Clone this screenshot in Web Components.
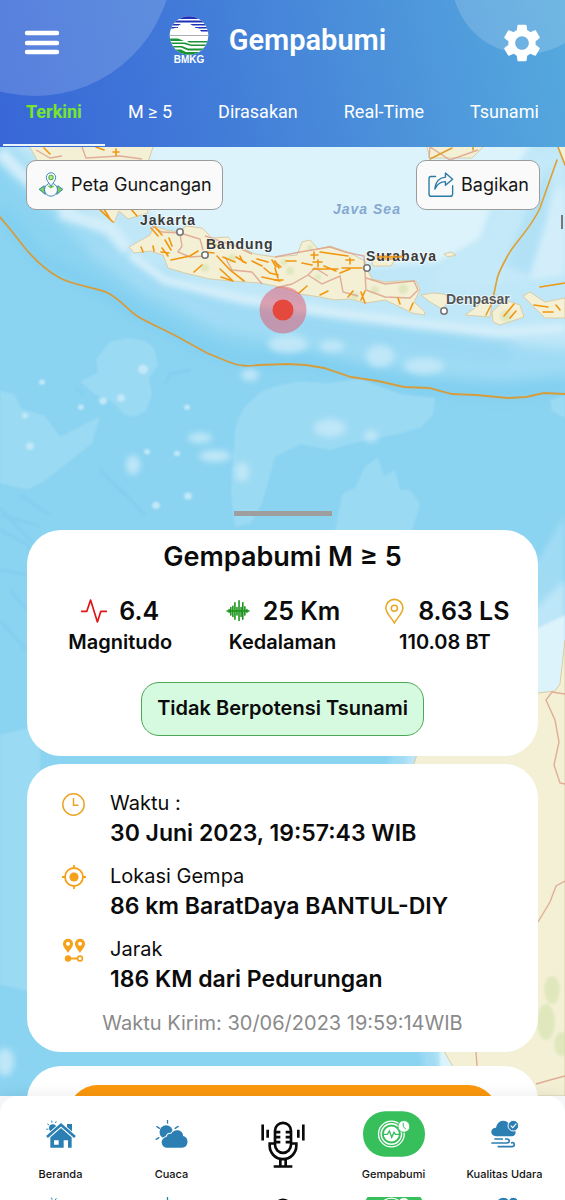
<!DOCTYPE html>
<html lang="id">
<head>
<meta charset="utf-8">
<meta name="viewport" content="width=device-width, initial-scale=1">
<title>Gempabumi</title>
<style>
  html, body { margin: 0; height: 100%; }
  body { font-family: Inter, "Liberation Sans", sans-serif; color: #0b0b0b; background: #fff; }
</style>
</head>
<body>
<gempa-app></gempa-app>

<template id="t-app">
  <style>
    :host { display: flex; flex-direction: column; height: 100vh; overflow: hidden; }
    main { position: relative; flex: 1; min-height: 0; overflow: hidden; }
    quake-map { position: absolute; inset: 0; }
    .scroll { position: relative; height: 100%; overflow-y: auto; scrollbar-width: none; }
    .tools { display: flex; justify-content: space-between; padding: 13px 25px 0 26px; }
    .handle { width: 98px; height: 5px; background: #9e9e9e; margin: 301px auto 14px; }
    .sheet { display: flex; flex-direction: column; gap: 8px; padding: 0 27px; }
    .metrics { display: grid; grid-template-columns: repeat(3, 1fr); padding: 0 12px; margin-top: 18px; }
    h2 { margin: 0; font-size: 27px; line-height: 36px; font-weight: 600; text-align: center; }
    .status { width: fit-content; box-sizing: border-box; height: 54px; margin: 27px auto 0; padding: 0 15px;
      border: 1px solid #4ca655; border-radius: 18px; background: #d6fae0; font-size: 20px; line-height: 50px; font-weight: 600; }
    .sent { margin: 14px 0 0; text-align: center; color: #8a8a8a; font-size: 20px; line-height: 28px; }
    .more { margin-top: 6px; }
    .more button { display: block; width: calc(100% - 81px); height: 60px; margin: 0 auto; border: 0; border-radius: 30px; background: #fb980d; }
  </style>
  <gempa-header></gempa-header>
  <main>
    <quake-map></quake-map>
    <div class="scroll">
      <div class="tools">
        <tool-button icon="peta">Peta Guncangan</tool-button>
        <tool-button icon="bagikan">Bagikan</tool-button>
      </div>
      <div class="handle"></div>
      <div class="sheet">
        <info-card style="--pad: 9px 0 20px">
          <h2>Gempabumi M ≥ 5</h2>
          <div class="metrics">
            <quake-metric icon="pulsa" label="Magnitudo">6.4</quake-metric>
            <quake-metric icon="gelombang" label="Kedalaman">25 Km</quake-metric>
            <quake-metric icon="pin" label="110.08 BT">8.63 LS</quake-metric>
          </div>
          <div class="status" role="status">Tidak Berpotensi Tsunami</div>
        </info-card>
        <info-card style="--pad: 25px 0 15px">
          <detail-row icon="jam" label="Waktu :">30 Juni 2023, 19:57:43 WIB</detail-row>
          <detail-row icon="lokasi" label="Lokasi Gempa">86 km BaratDaya BANTUL-DIY</detail-row>
          <detail-row icon="jarak" label="Jarak">186 KM dari Pedurungan</detail-row>
          <p class="sent">Waktu Kirim: 30/06/2023 19:59:14WIB</p>
        </info-card>
        <info-card class="more" style="--pad: 19px 0 30px"><button type="button" aria-label="Buka"></button></info-card>
      </div>
    </div>
  </main>
  <bottom-nav></bottom-nav>
</template>

<template id="t-header">
  <style>
    :host { display: block; position: relative; height: 147px; overflow: hidden; color: #fff;
      font-family: Roboto, "Liberation Sans", sans-serif;
      background: linear-gradient(78deg, #3866d7 0%, #417ad8 35%, #4b90da 65%, #55aade 100%); }
    .orb { position: absolute; border-radius: 50%; background: rgba(255,255,255,.16); }
    .a { width: 276px; height: 276px; left: -103px; top: -180px; }
    .b { width: 148px; height: 148px; right: -35px; top: -94px; }
    .bar { position: relative; display: flex; align-items: center; height: 85px; padding: 0 24px; justify-content: space-between; }
    button { border: 0; padding: 0; background: none; color: inherit; display: flex; }
    .brand { display: flex; align-items: center; gap: 20px; padding-bottom: 5px; margin-right: 8px; }
    h1 { margin: 0; font-size: 29px; line-height: 36px; font-weight: 600; }
    nav { position: relative; display: flex; padding-left: 3px; }
    nav a { padding: 13px 23px 21px; height: 25px; font-size: 18px; line-height: 28px; color: #fff; text-decoration: none; border-bottom: 2px solid transparent; white-space: nowrap; }
    nav a[aria-current] { color: #76e62c; font-weight: 700; border-bottom-color: #eaf6fa; }
  </style>
  <div class="orb a"></div><div class="orb b"></div>
  <div class="bar">
    <button type="button" aria-label="Menu"><app-icon name="menu" w="36" h="26"></app-icon></button>
    <div class="brand"><app-icon name="bmkg" w="40" h="48"></app-icon><h1>Gempabumi</h1></div>
    <button type="button" aria-label="Pengaturan"><app-icon name="gear" w="38" h="40"></app-icon></button>
  </div>
  <nav><a href="#terkini" aria-current="page">Terkini</a><a href="#m5">M ≥ 5</a><a href="#dirasakan">Dirasakan</a><a href="#realtime">Real-Time</a><a href="#tsunami">Tsunami</a></nav>
</template>

<template id="t-tool">
  <style>
    :host { display: block; }
    button { display: flex; align-items: center; gap: 7px; height: 50px; box-sizing: border-box; padding: 0 10px 0 11px;
      border: 1px solid #9b9b9b; border-radius: 10px; background: #fafafa; color: #161616; font: 400 18px/24px Inter, "Liberation Sans", sans-serif; }
  </style>
  <button type="button"><app-icon w="26" h="26"></app-icon><slot></slot></button>
</template>

<template id="t-card">
  <style>:host { display: block; background: #fff; border-radius: 34px; padding: var(--pad, 20px 0); }</style>
  <slot></slot>
</template>

<template id="t-metric">
  <style>
    :host { display: block; text-align: center; white-space: nowrap; }
    .v { display: flex; justify-content: center; align-items: center; gap: 12px; font-size: 25px; line-height: 36px; font-weight: 600; }
    .l { font-size: 20px; line-height: 26px; font-weight: 600; }
  </style>
  <div class="v"><app-icon w="26" h="26"></app-icon><slot></slot></div>
  <div class="l"></div>
</template>

<template id="t-detail">
  <style>
    :host { display: grid; grid-template-columns: 24px 1fr; column-gap: 24px; padding: 0 20px 0 35px; }
    :host(:not(:first-child)) { margin-top: 13px; }
    app-icon { margin-top: 3px; }
    .l { font-size: 20px; line-height: 28px; }
    .v { font-size: 23px; line-height: 32px; font-weight: 600; white-space: nowrap; }
  </style>
  <app-icon w="24" h="24"></app-icon>
  <div><div class="l"></div><div class="v"><slot></slot></div></div>
</template>

<template id="t-nav">
  <style>
    :host { display: block; position: relative; height: 104px; box-shadow: 0 -2px 14px rgba(0,0,0,.07); background: #f4f6f7; }
    nav { height: 104px; box-sizing: border-box; padding: 15px 5px 0; background: #fff; border-radius: 18px 18px 0 0; overflow: hidden; }
    .row { display: grid; grid-template-columns: repeat(5, 1fr); }
    a { display: flex; flex-direction: column; align-items: center; height: 75px; color: #111; text-decoration: none; font-size: 11px; line-height: 16px; font-weight: 500; white-space: nowrap; }
    .ic { height: 46px; display: flex; align-items: center; justify-content: center; margin-bottom: 9px; }
    .mic { height: 66px; }
    .peek { margin-top: 11px; height: 3px; overflow: hidden; align-items: start; }
    .peek .ic { margin: -9px 0 0; }
  </style>
  <nav>
    <div class="row">
      <a href="#beranda"><span class="ic"><app-icon name="rumah" w="30" h="28"></app-icon></span>Beranda</a>
      <a href="#cuaca"><span class="ic"><app-icon name="cuaca" w="33" h="28"></app-icon></span>Cuaca</a>
      <a href="#suara" aria-label="Suara"><span class="ic mic"><app-icon name="mic" w="44" h="47"></app-icon></span></a>
      <a href="#gempabumi" aria-current="page"><span class="ic"><app-icon name="gempa" w="62" h="46"></app-icon></span>Gempabumi</a>
      <a href="#udara"><span class="ic"><app-icon name="udara" w="28" h="28"></app-icon></span>Kualitas Udara</a>
    </div>
    <div class="row peek" aria-hidden="true">
      <span class="ic"><app-icon name="rumah" w="30" h="28"></app-icon></span>
      <span class="ic"><app-icon name="cuaca" w="33" h="28"></app-icon></span>
      <span class="ic mic"><app-icon name="mic" w="44" h="47"></app-icon></span>
      <span class="ic"><app-icon name="gempa" w="62" h="46"></app-icon></span>
      <span class="ic"><app-icon name="udara" w="28" h="28"></app-icon></span>
    </div>
  </nav>
</template>

<template id="t-map">
  <style>
    :host { display: block; overflow: hidden; background: #8ad3f1; }
    svg { display: block; width: 100%; height: 100%; }
    text { font-family: "Liberation Sans", Arial, sans-serif; }
    .city { font-size: 14px; font-weight: 700; fill: #3b3b3b; letter-spacing: 1px; paint-order: stroke; stroke: #fff; stroke-opacity: .6; stroke-width: 2px; }
    .plain { letter-spacing: 0; fill: #555; }
  </style>
  <svg viewBox="0 147 565 949" preserveAspectRatio="xMidYMin slice" role="img" aria-label="Peta pusat gempa">
    <defs>
      <filter id="b3" x="-20%" y="-20%" width="140%" height="140%"><feGaussianBlur stdDeviation="3"/></filter>
      <filter id="b8" x="-30%" y="-30%" width="160%" height="160%"><feGaussianBlur stdDeviation="6"/></filter>
      <filter id="b1" x="-20%" y="-20%" width="140%" height="140%"><feGaussianBlur stdDeviation="1"/></filter>
    </defs>
    <rect y="147" width="565" height="949" fill="#8ad3f1"/>
    <!-- shelf water around the islands -->
    <g filter="url(#b8)" fill="none" stroke-linejoin="round">
      <path d="M-20 150L50 215 100 262 160 300 220 332 290 345 350 358 430 374 500 380 590 372V130H-20z" fill="#9fdbf4"/>
      <path d="M0 135L75 205 140 262 220 296 300 312 380 322 450 330 530 346 590 350V130H0z" fill="#bfe7f8"/>
      <path d="M0 210L40 258 90 284 140 313 200 345 240 360 300 358 360 375 430 388 500 392 565 388" stroke="#7dcdf0" stroke-width="9"/>
      <path d="M300 322L360 334 440 345 510 352" stroke="#99d8f3" stroke-width="24"/>
      <path d="M90 248L150 290 220 320" stroke="#a3dcf5" stroke-width="12"/>
    </g>
    <path d="M148 140L148 215 190 232 270 262 360 268 440 262 480 240 492 205 530 147V140z" fill="#dcf3fb" filter="url(#b3)"/>
    <path d="M530 150L495 205 485 238 440 265 430 290 480 290 565 270V150z" fill="#c4e9f8" filter="url(#b3)"/>
    <path d="M550 165L525 215 505 265 530 275 550 230z" fill="#b2e1f6" filter="url(#b3)"/>
    <path d="M555 190L565 185V275L530 280z" fill="#d3eefa" filter="url(#b3)"/>
    <!-- deep-sea plateaus -->
    <g fill="#9bdaf3" filter="url(#b1)" transform="translate(0 22.500) scale(1 .925)">
      <path d="M110 345L128 341 145 344 154 352 158 370 149 384 152 402 146 420 135 426 125 424 112 410 95 402 80 388 98 378 96 364z"/>
      <path d="M0 398L14 402 22 418 45 425 60 448 78 438 100 426 96 440 92 455 65 478 45 495 28 505 0 498z"/>
      <path d="M235 440L240 424 245 415 262 398 280 392 300 388 330 390 360 385 400 402 435 406 433 424 420 438 395 446 372 450 350 456 330 462 300 456 285 464 275 470 262 520 250 542 235 545 231 510z"/>
      <path d="M365 480L378 470 384 490 395 484 400 505 410 505 420 520 412 550H335L342 510 356 502z"/>
      <path d="M550 408L565 403V428L552 420z"/>
      <path d="M0 770L40 760V1050L0 1040z"/>
    </g>
    <g fill="#c1e8f8" filter="url(#b1)" transform="translate(0 22.500) scale(1 .925)">
      <circle cx="143" cy="375" r="5"/><circle cx="121" cy="406" r="4"/><circle cx="103" cy="409" r="4"/><circle cx="81" cy="416" r="3"/><circle cx="187" cy="416" r="3"/><circle cx="25" cy="425" r="3"/><circle cx="42" cy="389" r="3"/><circle cx="30" cy="458" r="4"/><circle cx="147" cy="464" r="3"/><circle cx="177" cy="466" r="3"/><circle cx="156" cy="522" r="4"/><circle cx="188" cy="512" r="4"/>
    </g>
    <g fill="#bfe7f8" filter="url(#b3)">
      <ellipse cx="133" cy="465" rx="7" ry="10"/><ellipse cx="330" cy="428" rx="16" ry="9"/><ellipse cx="371" cy="436" rx="7" ry="6"/><ellipse cx="380" cy="356" rx="14" ry="11"/><ellipse cx="288" cy="344" rx="20" ry="9"/><ellipse cx="424" cy="366" rx="20" ry="8"/><ellipse cx="332" cy="346" rx="12" ry="6"/><ellipse cx="242" cy="472" rx="7" ry="10"/><ellipse cx="5" cy="1062" rx="9" ry="14"/><ellipse cx="215" cy="456" rx="16" ry="6"/><ellipse cx="200" cy="438" rx="12" ry="5"/><ellipse cx="250" cy="375" rx="9" ry="6"/>
    </g>
    <g fill="none" stroke="#7bcaee" stroke-width="2" filter="url(#b1)" opacity=".6">
      <path d="M165 384L170 374 190 370M0 508L30 540 55 560M0 620L26 650M0 530L28 545 40 580M28 712L60 728M0 570L26 575M0 515L40 526M10 590L27 610"/>
      <path d="M75 388L84 394M120 488L145 515M100 470L125 495M20 495L50 515"/>
    </g>
    <!-- coastal shallows -->
    <path d="M130 254L165 280 240 298 330 312 425 324 500 332 565 328" fill="none" stroke="#d6effa" stroke-width="9" filter="url(#b3)"/>
    <path d="M60 212L110 228 128 250M0 152L20 172 75 215" fill="none" stroke="#d3eefa" stroke-width="13" filter="url(#b3)"/>
    <!-- Australian shelf -->
    <path d="M565 515L538 560 450 630 400 720 380 800 400 950 430 1096H565z" fill="#a0dbf4" filter="url(#b3)"/>
    <path d="M565 580L538 606 480 640 410 740 400 800 425 960 442 1096H565z" fill="#bde6f8" filter="url(#b3)"/>
    <path d="M565 615L538 628 500 650 440 720V1096H565z" fill="#dcf3fb" filter="url(#b1)"/>
    <!-- land -->
    <g fill="#f3f0d6" stroke="#d9cda6" stroke-width="1">
      <path d="M26 140L36 158 48 180 72 200 100 208 114 223 119 211 128 219 148 213 146 196 152 180 147 165 153 147V140z"/>
      <path d="M425 140L430 158H472L484 146V140zM556 140L562 158 570 170V140z"/>
      <path d="M129 247L134 253 150 251 163 255 168 268 185 273 210 279 232 281 260 283 285 288 300 294 320 297 335 300 350 299 366 303 385 300 400 307 412 313 425 315 424 311 414 302 420 290 416 281 400 281 385 282 372 279 368 271 365 261 350 253 330 246 318 249 310 240 302 242 297 255 275 257 255 254 235 245 228 237 212 238 202 228 186 226 178 232 166 230 154 226 150 235z"/>
      <path d="M371 259L388 257 395 260 391 266 373 266zM421 295L433 293 444 294 450 300 442 309 430 302zM465 315L478 306 484 297 492 303 490 317zM492 312L505 300 520 305 524 317 500 325 493 322zM523 296L530 292 545 302 565 298V318L545 318 535 308zM444 254L451 252 456 255 448 257z"/>
      <path d="M565 640L560 684 555 691 538 693 480 700 440 730 416 757 404 800 418 930 441 1046 455 1070 470 1096H565z"/>
    </g>
    <g fill="#cfe0a6" opacity=".5" filter="url(#b1)">
      <circle cx="205" cy="268" r="4"/><circle cx="232" cy="258" r="4"/><circle cx="375" cy="290" r="4"/><circle cx="403" cy="289" r="5"/><circle cx="310" cy="248" r="3"/><circle cx="506" cy="316" r="6"/><circle cx="355" cy="296" r="4"/><circle cx="290" cy="271" r="4"/><circle cx="284" cy="262" r="3"/><circle cx="318" cy="277" r="3"/>
      <ellipse cx="552" cy="990" rx="8" ry="14"/><ellipse cx="546" cy="1022" rx="9" ry="18"/><ellipse cx="562" cy="1044" rx="8" ry="12"/>
    </g>
    <g fill="none" stroke="#dc9c86" stroke-width="1.400" stroke-opacity=".8">
      <path d="M36 150L50 158 62 156M82 147L86 158 120 156 142 159M152 226L162 232 180 233 200 239 203 250M180 234L182 246 178 252 190 257 205 256M205 236L235 246 252 254M225 257L232 270 252 272 262 284"/>
      <path d="M275 257L300 252 330 247 345 252 364 256 366 290 385 297 410 298 418 290 414 281 385 284 366 278M275 288L292 284 308 275 322 284 340 276 343 292 358 296M308 275L315 268 328 276M429 158L430 147 450 160 478 150"/>
      <path d="M565 694L552 692 546 700 555 720 559 742 554 765 560 783 565 784M565 881L556 886 550 902 538 922M536 1084L550 1080 565 1076M476 1052L477 1066"/>
    </g>
    <!-- faults -->
    <g fill="none" stroke="#f0960f" stroke-width="1.600" stroke-linecap="round">
      <path d="M100 210L113 222M104 209L110 219M131 209L137 216M44 148L50 154M96 147L104 150M116 149V156M113 152H119M151 228L158 236M155 227L162 235M141 247L143 252M153 246L154 251M165 240L171 250M169 238L172 246M162 248L168 256M161 252L169 253M171 260L190 256 198 251M194 272L202 265M217 256L230 270 244 281M220 269L232 280M221 277L233 281M223 257L235 262M236 257L246 263M240 256L243 262M252 261L262 266M257 259L268 262M264 268L270 273 278 275M262 277L280 281M272 260L276 267M275 261L279 268M205 252L214 253M208 241L218 246"/>
      <path d="M286 261H296M302 263L312 265M311 255H318M314 252V259M313 262H322M318 260V267M320 252L348 256M346 260H354M350 258V264M313 269H338M324 266L336 271M342 268H362M340 273L350 269M275 262L281 267M275 280H283M299 293L307 286M320 295L328 291M348 297L353 291M361 300L365 291M361 292L365 303M398 298L400 304M410 310L413 303M376 256H405M378 259H396M504 316L514 304M510 318L516 311M534 305L548 307M543 312H553M556 305L560 310M540 287L565 283M275 268L278 278"/>
      <path d="M430 159L452 148M473 147V150M558 147L565 165M557 160L540 208C530 230 514 243 507 257C500 270 497 276 496 284L492 303 486 315" stroke="#dfa02f"/>
      <path d="M0 217L10 229 25 248C35 260 45 270 60 278C75 286 95 287 108 293C121 300 127 309 137 316C150 324 166 330 187 342L207 353 229 362C240 367 250 366 259 365L288 364 306 365 324 368 351 377 378 381 404 387 429 388 452 394 476 395 508 398 526 397 544 393 565 394" stroke="#d69c3c" stroke-width="1.800"/>
    </g>
    <g fill="#fff" stroke="#777" stroke-width="1.600"><circle cx="180" cy="232" r="3.200"/><circle cx="205" cy="255" r="3.200"/><circle cx="367" cy="268" r="3.200"/><circle cx="444" cy="311" r="3.200"/></g>
    <text class="city" x="140" y="225">Jakarta</text>
    <text class="city" x="206" y="249">Bandung</text>
    <text class="city" x="366" y="261">Surabaya</text>
    <text class="city plain" x="446" y="304">Denpasar</text>
    <path d="M377 257H403" stroke="#f0960f" stroke-width="1.500"/>
    <text x="333" y="214" font-size="14" font-style="italic" font-weight="700" fill="#86a8cf" letter-spacing="1">Java Sea</text>
    <path d="M562 215V229" stroke="#777" stroke-width="2"/>
    <circle cx="283" cy="310" r="23.500" fill="#e4536a" fill-opacity=".5"/>
    <circle cx="283" cy="310" r="10.500" fill="#e5493d"/>
  </svg>
</template>

<script>
const ICONS = {
  menu: ['0 0 36 26', '<path d="M3 3H33M3 13H33M3 22H33" stroke="#fff" stroke-width="4.400" stroke-linecap="round"/>'],
  gear: ['2 1.600 20 20.800', '<path fill="#fff" d="M19.14 12.94c.04-.3.06-.61.06-.94s-.02-.64-.07-.94l2.03-1.58c.18-.14.23-.41.12-.61l-1.92-3.32c-.12-.22-.37-.29-.59-.22l-2.39.96c-.5-.38-1.03-.7-1.62-.94l-.36-2.54c-.04-.24-.24-.41-.48-.41h-3.84c-.24 0-.43.17-.47.41l-.36 2.54c-.59.24-1.13.57-1.62.94l-2.39-.96c-.22-.08-.47 0-.59.22L2.74 8.87c-.12.21-.08.47.12.61l2.03 1.58c-.05.3-.09.63-.09.94s.02.64.07.94l-2.03 1.58c-.18.14-.23.41-.12.61l1.92 3.32c.12.22.37.29.59.22l2.39-.96c.5.38 1.03.7 1.62.94l.36 2.54c.05.24.24.41.48.41h3.84c.24 0 .44-.17.47-.41l.36-2.54c.59-.24 1.13-.56 1.62-.94l2.39.96c.22.08.47 0 .59-.22l1.92-3.32c.12-.22.07-.47-.12-.61l-2.01-1.58zM12 15.600c-1.980 0-3.600-1.620-3.600-3.600s1.620-3.600 3.600-3.600 3.600 1.620 3.600 3.600-1.620 3.600-3.600 3.600z"/>'],
  bmkg: ['0 0 40 48', '<defs><clipPath id="c"><circle cx="20" cy="19.500" r="19.300"/></clipPath></defs><g clip-path="url(#c)"><rect width="40" height="40" fill="#fff"/><path d="M0 0H40V3H0zM0 4.500H40V6.500H0zM0 8H40V9.500H0zM0 11H9V12.500H0zM26 11H40V12.500H26zM31 14H40V15.500H31z" fill="#1c30b8"/><path d="M2 17Q4 11 9 12Q10 7 16 8Q22 6 25 12Q30 11 33 17z" fill="#fff"/><path d="M0 19.500H40" stroke="#aab0aa" stroke-width="1.200"/><path d="M0 22.500H9L15 25H0zM0 26.500H16L22 28.500H40V30H22L15 28H0zM18 25H40V26.500H20zM0 30H13L19 32.500H40V34.500H19L12 31.500H0zM4 33.500H12L17 36H38V39H14z" fill="#1a9334"/></g><text x="20" y="47" text-anchor="middle" font-family="Liberation Sans, Arial, sans-serif" font-size="10" font-weight="700" fill="#fff">BMKG</text>'],
  peta: ['0 0 72 72', '<path d="M17 38L3 48 20 62zM55 38L69 48 52 62z" fill="#7fce62" stroke="#2f7fb0" stroke-width="2.500"/><ellipse cx="36" cy="49" rx="18" ry="18" fill="#fafafa" stroke="#2f7fb0" stroke-width="2.500"/><path d="M25 38H47L36 46z" fill="#6cc04a"/><path d="M36 39C28 28 23 22 23 15a13 13 0 0 1 26 0C49 22 44 28 36 39z" fill="#fafafa" stroke="#2f7fb0" stroke-width="2.500"/><circle cx="36" cy="15" r="6" fill="#b6ea8c" stroke="#55b247" stroke-width="3"/>'],
  bagikan: ['0 0 76 76', '<g fill="none" stroke="#2a7ba6" stroke-width="4" stroke-linecap="round" stroke-linejoin="round"><path d="M22 13H9Q3 13 3 19V64Q3 71 10 71H65Q72 71 72 64V40"/><path d="M20 50Q22 18 51 15V3L72 21 51 39V28Q30 28 20 50z"/></g>'],
  pulsa: ['0 0 76 76', '<path d="M2 39H17L28 6 48 70 58 39H74" fill="none" stroke="#e01717" stroke-width="5" stroke-linejoin="round" stroke-linecap="round"/>'],
  gelombang: ['0 0 76 76', '<path d="M6 38H70M12 34V42M17 28V50M23 24V54M29 14V62M35 28V50M41 8V66M47 28V54M52 14V62M58 26V50M64 34V42" stroke="#189318" stroke-width="4.600" stroke-linecap="round"/>'],
  pin: ['0 0 76 76', '<g fill="none" stroke="#e5a81f" stroke-width="4.400"><path d="M42 73C30 53 17 43 17 29a25 25 0 0 1 50 0C67 43 54 53 42 73z"/><circle cx="42" cy="30" r="9"/></g>'],
  jam: ['0 0 24 24', '<g fill="none" stroke="#eba425" stroke-width="1.500"><circle cx="11.500" cy="12.500" r="10.700"/><path d="M11.500 6V13.200H16.500"/></g>'],
  lokasi: ['0 0 24 24', '<g stroke="#f6a11a" fill="none" stroke-width="1.800"><circle cx="12" cy="12" r="9"/><path d="M12 0V4M12 20V24M0 12H4M20 12H24"/></g><circle cx="12" cy="12" r="4.600" fill="#f6a11a"/>'],
  jarak: ['0 0 24 24', '<g fill="#f6a11a"><path fill-rule="evenodd" d="M6 15C3.500 11 1 9 1 5.800a5 5 0 0 1 10 0C11 9 8.500 11 6 15zM6 3.800a2 2 0 1 0 0 4 2 2 0 0 0 0-4zM18 15C15.500 11 13 9 13 5.800a5 5 0 0 1 10 0C23 9 20.500 11 18 15zM18 3.800a2 2 0 1 0 0 4 2 2 0 0 0 0-4z"/><circle cx="6" cy="20.500" r="3.200"/><path d="M8 19.500H16V21.500H8z"/></g><circle cx="18" cy="20.500" r="2.400" fill="#fff" stroke="#f6a11a" stroke-width="1.600"/>'],
  rumah: ['0 0 90 84', '<g fill="#2b7fb3"><circle cx="20" cy="24" r="11"/><path d="M63 12H78V42L63 28z"/><path fill-rule="evenodd" d="M13 52L45 24 77 52V83H66V61H53V83H13zM24 61V74H38V61z"/></g><path d="M3 51L45 14 87 51" fill="none" stroke="#fff" stroke-width="13"/><path d="M3 51L45 14 87 51" fill="none" stroke="#2b7fb3" stroke-width="8"/><path d="M17 2L18 8M31 4L28 9M4 12L9 15M1 28L7 27" stroke="#2b7fb3" stroke-width="3"/>'],
  cuaca: ['0 0 98 84', '<g fill="#2b7fb3"><circle cx="33" cy="36" r="20"/><path d="M37 83a16 16 0 0 1-3-32Q36 40 48 41Q56 28 70 31Q83 34 84 48Q97 51 97 66Q96 83 80 83z" stroke="#fff" stroke-width="6" paint-order="stroke"/></g><path d="M37 1V9M5 20L13 25M3 58L11 53M60 25L69 19" stroke="#2b7fb3" stroke-width="4" stroke-linecap="round"/>'],
  mic: ['0 0 132 140', '<g fill="none" stroke="#0a0a0a" stroke-width="8"><path d="M5 10V58M20 26V50M127 10V58M112 26V50"/><rect x="42" y="5" width="48" height="90" rx="24"/><path d="M42 33H58M42 48H58M42 63H58M90 33H74M90 48H74M90 63H74M42 67H26V74a40 40 0 0 0 80 0V67H90M58 114V134M74 114V134M38 136H94"/></g>'],
  gempa: ['0 0 188 138', '<rect width="188" height="138" rx="68" fill="#37bf5c"/><circle cx="86" cy="69" r="39" fill="none" stroke="#fff" stroke-width="4"/><circle cx="86" cy="69" r="31" fill="none" stroke="#fff" stroke-width="4"/><circle cx="86" cy="69" r="23" fill="#fff"/><path d="M62 70H74L80 60 87 79 94 64 98 70H110" fill="none" stroke="#37bf5c" stroke-width="4"/><circle cx="124" cy="46" r="18" fill="#fff" stroke="#37bf5c" stroke-width="3"/><path d="M122 35V47L130 54" fill="none" stroke="#37bf5c" stroke-width="3"/>'],
  udara: ['0 0 84 84', '<path d="M15 49Q0 47 1 34Q3 23 15 23Q19 3 36 2Q50 2 55 14Q74 20 74 38Q72 48 63 49z" fill="#2b7fb3"/><circle cx="67" cy="17" r="16" fill="#2b7fb3" stroke="#fff" stroke-width="3"/><path d="M59 17L65 23 76 11" fill="none" stroke="#fff" stroke-width="3.500"/><g fill="none" stroke="#2b7fb3" stroke-width="5"><path d="M10 57H36M42 57H50Q56 59 54 66Q52 69 46 69H1M20 80H62Q70 80 70 73Q69 66 60 69"/></g>']
};

const stamp = (el, id) => {
  const root = el.attachShadow({ mode: 'open' });
  root.append(document.getElementById(id).content.cloneNode(true));
  return root;
};

customElements.define('app-icon', class extends HTMLElement {
  static observedAttributes = ['name'];
  connectedCallback() { this.draw(); }
  attributeChangedCallback() { if (this.isConnected) this.draw(); }
  draw() {
    const icon = ICONS[this.getAttribute('name')];
    if (!icon) return;
    const root = this.shadowRoot || this.attachShadow({ mode: 'open' });
    root.innerHTML = `<style>:host{display:block;flex:none}svg{display:block}</style>
      <svg width="${this.getAttribute('w')}" height="${this.getAttribute('h')}" viewBox="${icon[0]}" fill="none" aria-hidden="true">${icon[1]}</svg>`;
  }
});

const simple = (tag, id) => customElements.define(tag, class extends HTMLElement {
  constructor() { super(); stamp(this, id); }
  connectedCallback() {
    const glyph = this.getAttribute('icon');
    const label = this.getAttribute('label');
    if (glyph) this.shadowRoot.querySelector('app-icon').setAttribute('name', glyph);
    if (label) this.shadowRoot.querySelector('.l').textContent = label;
  }
});
simple('tool-button', 't-tool');
simple('info-card', 't-card');
simple('quake-metric', 't-metric');
simple('detail-row', 't-detail');
simple('quake-map', 't-map');
simple('gempa-header', 't-header');
simple('bottom-nav', 't-nav');
simple('gempa-app', 't-app');
</script>
</body>
</html>
